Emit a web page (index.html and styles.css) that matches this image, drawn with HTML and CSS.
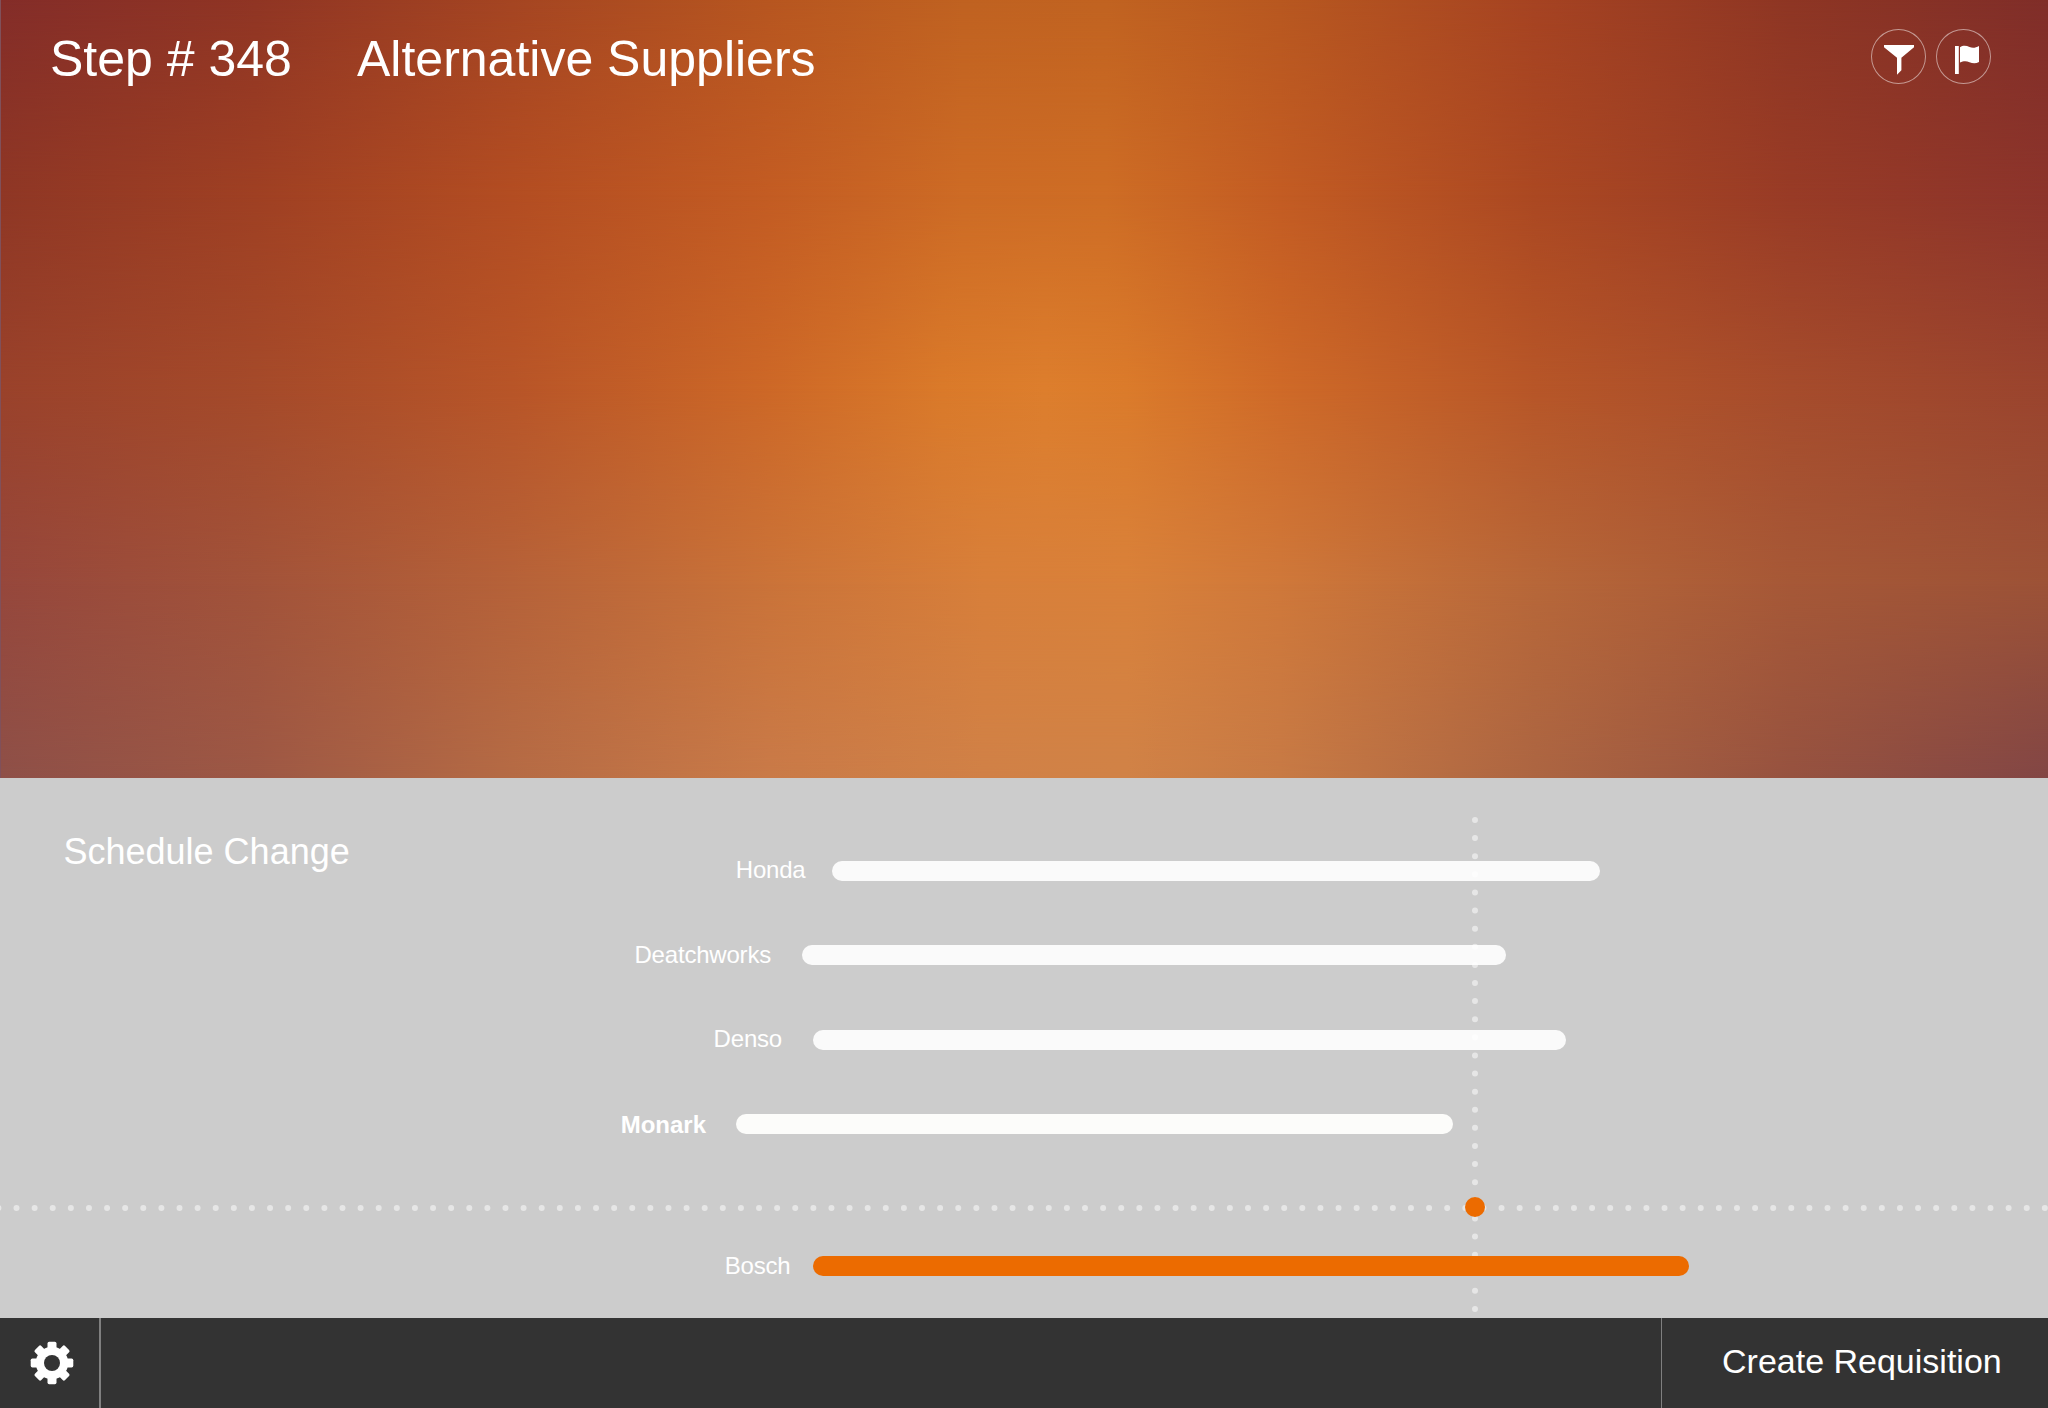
FILE: index.html
```html
<!DOCTYPE html>
<html lang="en">
<head>
<meta charset="utf-8">
<title>Alternative Suppliers</title>
<link rel="stylesheet" href="styles.css">
</head>
<body>
<main class="app">
  <section class="hero">
    <div class="glow" aria-hidden="true">
      <div class="band band-1"></div>
      <div class="band band-2"></div>
      <div class="band band-3"></div>
      <div class="band band-4"></div>
      <div class="band band-5"></div>
    </div>
    <header class="topbar">
      <span class="step">Step # 348</span>
      <h1 class="title">Alternative Suppliers</h1>
      <div class="actions">
        <button class="round" aria-label="Filter">
          <svg viewBox="0 0 55 55"><path d="M13 16H43V18.2L30.4 28.8V41.3L26 45.7V28.8L13 18.2Z"/></svg>
        </button>
        <button class="round" aria-label="Flag">
          <svg viewBox="0 0 55 55"><path d="M19 17H22.8V45H19ZM24 18.2C27.5 16.1 30.5 16.8 33.5 18.1C36.8 19.4 39.8 18.8 43 17V33C39.8 34.8 36.8 34.6 33.5 33.2C30.5 31.9 27.5 31.8 24 33.6Z"/></svg>
        </button>
      </div>
    </header>
  </section>

  <section class="schedule">
    <h2 class="heading">Schedule Change</h2>
    <svg class="guides" viewBox="0 0 2048 540" aria-hidden="true">
      <path d="M-1.6 430H2048M1475 42V535"/>
    </svg>
    <div class="rows">
      <div class="row honda"><span class="name">Honda</span><span class="bar" style="width:768px"></span></div>
      <div class="row deatchworks"><span class="name">Deatchworks</span><span class="bar" style="width:704px"></span></div>
      <div class="row denso"><span class="name">Denso</span><span class="bar" style="width:753px"></span></div>
      <div class="row monark"><span class="name">Monark</span><span class="bar" style="width:717px"></span></div>
      <div class="row bosch"><span class="name">Bosch</span><span class="bar" style="width:876px"></span></div>
    </div>
    <span class="knob"></span>
  </section>

  <footer class="bottombar">
    <button class="settings" aria-label="Settings">
      <svg viewBox="-22 -22 44 44">
        <defs><rect id="tooth" x="-4.5" y="-21.3" width="9" height="10" rx="1.7"/></defs>
        <circle r="16.2"/>
        <use href="#tooth"/><use href="#tooth" transform="rotate(45)"/>
        <use href="#tooth" transform="rotate(90)"/><use href="#tooth" transform="rotate(135)"/>
        <use href="#tooth" transform="rotate(180)"/><use href="#tooth" transform="rotate(225)"/>
        <use href="#tooth" transform="rotate(270)"/><use href="#tooth" transform="rotate(315)"/>
        <circle class="hole" r="8"/>
      </svg>
    </button>
    <button class="create">Create Requisition</button>
  </footer>
</main>
</body>
</html>
```
FILE: styles.css
```css
* { box-sizing: border-box; }
body {
  margin: 0;
  font-family: "Liberation Sans", Arial, sans-serif;
  color: #fff;
}
button {
  margin: 0;
  padding: 0;
  border: 0;
  background: none;
  color: inherit;
  font: inherit;
}
h1, h2 { margin: 0; font-weight: 400; }

.app {
  display: grid;
  grid-template-rows: 778px 540px 90px;
  width: 2048px;
  height: 1408px;
  overflow: hidden;
}

/* Hero: horizontal colour bands that fade into one another */
.hero { position: relative; }
.glow {
  position: absolute;
  inset: 0;
  box-shadow: inset 1px 0 #80505a;
}
.band { position: absolute; inset: 0; z-index: -1; }
.band-1 { background: linear-gradient(90deg, #842d29, #903524 12.5%, #a54522 25%, #b75620 37.5%, #c06221 47%, #c16321 54%, #b85820 62.5%, #a64322 75%, #8e3624 87.5%, #802e29); }
.band-2 {
  background: linear-gradient(90deg, #8f3725, #9f4023 12.5%, #b34d22 25%, #c35c23 37.5%, #cd6b25 47%, #ce6d25 54%, #c35c23 62.5%, #ab4822 75%, #983b26 87.5%, #8c342b);
  mask-image: linear-gradient(transparent, #000 25%);
}
.band-3 {
  background: linear-gradient(90deg, #9a422b, #a54a2a 12.5%, #b85528 25%, #cd6827 37.5%, #da7a2a 46%, #dd7e2d 51%, #db7b2b 55%, #cf6a28 62.5%, #b75628 75%, #a64c2c 87.5%, #9a442e);
  mask-image: linear-gradient(transparent 25%, #000 50%);
}
.band-4 {
  background: linear-gradient(90deg, #96473c, #a2533a 12.5%, #b66239 25%, #ca7339 37.5%, #d87f3a 48%, #d9813a 55%, #cf783a 62.5%, #b76739 75%, #a65837 87.5%, #9c5237);
  mask-image: linear-gradient(transparent 50%, #000 75%);
}
.band-5 {
  background: linear-gradient(90deg, #8e5048, #9d5845 12.5%, #b56b45 25%, #c97a48 37.5%, #d08147 48%, #d08247 55%, #c77a45 62.5%, #ac6542 75%, #965240 87.5%, #824645);
  mask-image: linear-gradient(transparent 75%, #000);
}

.topbar {
  position: relative;
  display: flex;
  align-items: flex-start;
  padding: 29px 57px 0 50px;
}
.step, .title {
  font-size: 50px;
  line-height: 60px;
  white-space: nowrap;
}
.step { width: 307px; }
.actions { display: flex; gap: 10px; margin-left: auto; }
.round {
  width: 55px;
  height: 55px;
  border-radius: 50%;
  box-shadow: inset 0 0 0 1px rgba(255, 255, 255, .5);
}
.round svg { display: block; width: 55px; height: 55px; fill: #fff; }

/* Schedule chart */
.schedule {
  position: relative;
  display: grid;
  grid-template-columns: 500px 1fr;
  background: #ccc;
}
.heading {
  padding: 53px 0 0 63.5px;
  font-size: 36px;
  line-height: 42px;
  white-space: nowrap;
}
.guides {
  position: absolute;
  inset: 0;
  width: 2048px;
  height: 540px;
  fill: none;
  stroke: #e6e6e6;
  stroke-width: 6;
  stroke-linecap: round;
  stroke-dasharray: 0 18.11;
}
.rows { position: relative; padding-top: 83px; }
.row { display: flex; align-items: center; height: 20px; }
.name {
  text-align: right;
  font-size: 24px;
  line-height: 28px;
  letter-spacing: -.2px;
  white-space: nowrap;
}
.bar {
  height: 20px;
  border-radius: 10px;
  background: rgba(255, 255, 255, .9);
}
.honda .name { width: 332px; padding-right: 26.5px; margin-top: -2px; }
.deatchworks { margin-top: 64px; }
.deatchworks .name { width: 302px; padding-right: 31px; }
.denso { margin-top: 65px; }
.denso .name { width: 313px; padding-right: 31px; margin-top: -2px; }
.monark { margin-top: 64px; }
.monark .name { width: 236px; padding-right: 30px; font-weight: 700; letter-spacing: 0; margin-top: 2px; }
.monark .bar { background: #fcfcfa; }
.bosch { margin-top: 122px; }
.bosch .name { width: 313px; padding-right: 22.5px; }
.bosch .bar { background: #ec6b00; }
.knob {
  position: absolute;
  left: 1465px;
  top: 419px;
  width: 20px;
  height: 20px;
  border-radius: 50%;
  background: #ec6b00;
}

.bottombar {
  display: flex;
  justify-content: space-between;
  background: #333;
}
.settings {
  width: 101px;
  padding: 22.5px 0 0 30px;
  border-right: 2px solid #808080;
  display: flex;
  align-items: flex-start;
}
.settings svg { width: 44px; height: 44px; fill: #fff; }
.settings .hole { fill: #333; }
.create {
  width: 387px;
  padding: 0 0 4px 60px;
  border-left: 1px solid #808080;
  font-size: 34px;
  text-align: left;
  white-space: nowrap;
}
```
